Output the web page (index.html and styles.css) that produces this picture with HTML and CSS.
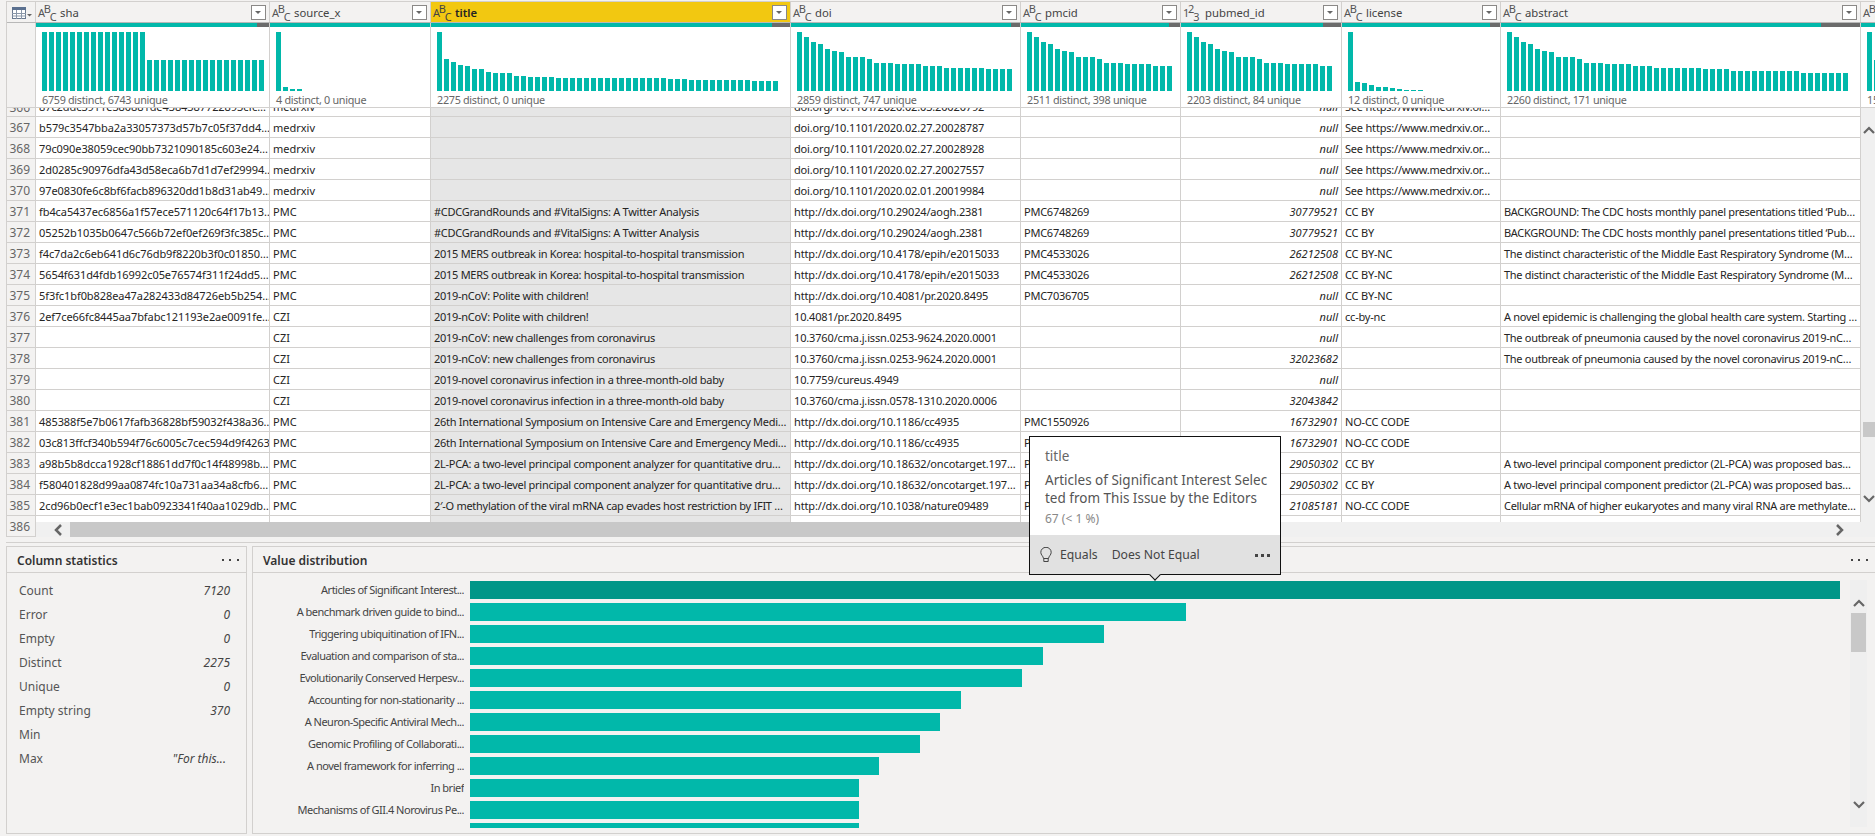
FILE: index.html
```html
<!DOCTYPE html>
<html lang="en">
<head>
<meta charset="utf-8">
<title>Column profile</title>
<link rel="stylesheet" href="styles.css">
</head>
<body>
<div class="table">
  <div class="cols head">
    <div class="corner"><svg width="20" height="12" viewBox="0 0 20 12"><rect x=".5" y=".5" width="13" height="11" fill="#fff" stroke="#6b7a90"/><rect x="0" y="0" width="14" height="3" fill="#5b7190"/><path d="M0 6.5h14M0 9h14M4.5 3v9M9.500 3v9" stroke="#8a97a8" fill="none"/><path d="M15 7h5l-2.500 2.500z" fill="#666"/></svg></div>
    <div class="h"><span class="abc">A<sup>B</sup><sub>C</sub></span><span class="name">sha</span><span class="fb"></span></div>
    <div class="h"><span class="abc">A<sup>B</sup><sub>C</sub></span><span class="name">source_x</span><span class="fb"></span></div>
    <div class="h sel"><span class="abc">A<sup>B</sup><sub>C</sub></span><span class="name">title</span><span class="fb"></span></div>
    <div class="h"><span class="abc">A<sup>B</sup><sub>C</sub></span><span class="name">doi</span><span class="fb"></span></div>
    <div class="h"><span class="abc">A<sup>B</sup><sub>C</sub></span><span class="name">pmcid</span><span class="fb"></span></div>
    <div class="h"><span class="abc">1<sup>2</sup><sub>3</sub></span><span class="name">pubmed_id</span><span class="fb"></span></div>
    <div class="h"><span class="abc">A<sup>B</sup><sub>C</sub></span><span class="name">license</span><span class="fb"></span></div>
    <div class="h"><span class="abc">A<sup>B</sup><sub>C</sub></span><span class="name">abstract</span><span class="fb"></span></div>
    <div class="h"><span class="abc">A<sup>B</sup><sub>C</sub></span></div>
  </div>
  <div class="cols profile">
    <div class="pcorner"></div>
    <div class="p"><div class="q"><b></b><u style="width:12px"></u></div><div class="bars"><i style="height:59px"></i><i style="height:59px"></i><i style="height:59px"></i><i style="height:59px"></i><i style="height:59px"></i><i style="height:59px"></i><i style="height:59px"></i><i style="height:59px"></i><i style="height:59px"></i><i style="height:59px"></i><i style="height:59px"></i><i style="height:59px"></i><i style="height:59px"></i><i style="height:59px"></i><i style="height:59px"></i><i style="height:31px"></i><i style="height:31px"></i><i style="height:31px"></i><i style="height:31px"></i><i style="height:31px"></i><i style="height:31px"></i><i style="height:31px"></i><i style="height:31px"></i><i style="height:31px"></i><i style="height:31px"></i><i style="height:31px"></i><i style="height:31px"></i><i style="height:31px"></i><i style="height:31px"></i><i style="height:31px"></i><i style="height:31px"></i><i style="height:31px"></i></div><div class="st">6759 distinct, 6743 unique</div></div>
    <div class="p"><div class="q"><b></b></div><div class="bars"><i style="height:59px"></i><i style="height:4px"></i><i style="height:2px"></i><i style="height:2px"></i></div><div class="st">4 distinct, 0 unique</div></div>
    <div class="p"><div class="q"><b></b><u style="width:18px"></u></div><div class="bars"><i style="height:59px"></i><i style="height:32px"></i><i style="height:29px"></i><i style="height:26px"></i><i style="height:25px"></i><i style="height:22px"></i><i style="height:22px"></i><i style="height:19px"></i><i style="height:18px"></i><i style="height:18px"></i><i style="height:18px"></i><i style="height:15px"></i><i style="height:15px"></i><i style="height:14px"></i><i style="height:14px"></i><i style="height:14px"></i><i style="height:14px"></i><i style="height:13px"></i><i style="height:13px"></i><i style="height:13px"></i><i style="height:13px"></i><i style="height:13px"></i><i style="height:13px"></i><i style="height:13px"></i><i style="height:13px"></i><i style="height:13px"></i><i style="height:13px"></i><i style="height:13px"></i><i style="height:13px"></i><i style="height:13px"></i><i style="height:13px"></i><i style="height:13px"></i><i style="height:13px"></i><i style="height:12px"></i><i style="height:12px"></i><i style="height:12px"></i><i style="height:11px"></i><i style="height:11px"></i><i style="height:11px"></i><i style="height:11px"></i><i style="height:11px"></i><i style="height:11px"></i><i style="height:11px"></i><i style="height:11px"></i><i style="height:11px"></i><i style="height:10px"></i><i style="height:10px"></i><i style="height:10px"></i><i style="height:10px"></i></div><div class="st">2275 distinct, 0 unique</div></div>
    <div class="p"><div class="q"><b></b><u style="width:9px"></u></div><div class="bars"><i style="height:59px"></i><i style="height:54px"></i><i style="height:49px"></i><i style="height:47px"></i><i style="height:42px"></i><i style="height:40px"></i><i style="height:39px"></i><i style="height:34px"></i><i style="height:34px"></i><i style="height:34px"></i><i style="height:32px"></i><i style="height:28px"></i><i style="height:28px"></i><i style="height:28px"></i><i style="height:27px"></i><i style="height:27px"></i><i style="height:27px"></i><i style="height:27px"></i><i style="height:25px"></i><i style="height:25px"></i><i style="height:25px"></i><i style="height:23px"></i><i style="height:23px"></i><i style="height:23px"></i><i style="height:23px"></i><i style="height:23px"></i><i style="height:23px"></i><i style="height:22px"></i><i style="height:22px"></i><i style="height:22px"></i><i style="height:22px"></i></div><div class="st">2859 distinct, 747 unique</div></div>
    <div class="p"><div class="q"><b></b><u style="width:11px"></u></div><div class="bars"><i style="height:59px"></i><i style="height:54px"></i><i style="height:49px"></i><i style="height:47px"></i><i style="height:42px"></i><i style="height:40px"></i><i style="height:39px"></i><i style="height:34px"></i><i style="height:34px"></i><i style="height:34px"></i><i style="height:32px"></i><i style="height:28px"></i><i style="height:28px"></i><i style="height:28px"></i><i style="height:27px"></i><i style="height:27px"></i><i style="height:27px"></i><i style="height:27px"></i><i style="height:25px"></i><i style="height:25px"></i><i style="height:25px"></i></div><div class="st">2511 distinct, 398 unique</div></div>
    <div class="p"><div class="q"><b></b><u style="width:18px"></u></div><div class="bars"><i style="height:59px"></i><i style="height:54px"></i><i style="height:49px"></i><i style="height:47px"></i><i style="height:42px"></i><i style="height:40px"></i><i style="height:39px"></i><i style="height:34px"></i><i style="height:34px"></i><i style="height:34px"></i><i style="height:32px"></i><i style="height:28px"></i><i style="height:28px"></i><i style="height:28px"></i><i style="height:27px"></i><i style="height:27px"></i><i style="height:27px"></i><i style="height:27px"></i><i style="height:27px"></i><i style="height:25px"></i><i style="height:25px"></i></div><div class="st">2203 distinct, 84 unique</div></div>
    <div class="p"><div class="q"><b></b><u style="width:10px"></u></div><div class="bars"><i style="height:59px"></i><i style="height:9px"></i><i style="height:8px"></i><i style="height:6px"></i><i style="height:4px"></i><i style="height:4px"></i><i style="height:3px"></i><i style="height:2px"></i><i style="height:1px"></i><i style="height:1px"></i><i style="height:1px"></i></div><div class="st">12 distinct, 0 unique</div></div>
    <div class="p"><div class="q"><b></b><u style="width:39px"></u></div><div class="bars"><i style="height:59px"></i><i style="height:54px"></i><i style="height:49px"></i><i style="height:47px"></i><i style="height:42px"></i><i style="height:40px"></i><i style="height:39px"></i><i style="height:34px"></i><i style="height:34px"></i><i style="height:34px"></i><i style="height:32px"></i><i style="height:28px"></i><i style="height:28px"></i><i style="height:28px"></i><i style="height:27px"></i><i style="height:27px"></i><i style="height:27px"></i><i style="height:27px"></i><i style="height:25px"></i><i style="height:25px"></i><i style="height:25px"></i><i style="height:23px"></i><i style="height:23px"></i><i style="height:23px"></i><i style="height:23px"></i><i style="height:23px"></i><i style="height:23px"></i><i style="height:23px"></i><i style="height:22px"></i><i style="height:22px"></i><i style="height:22px"></i><i style="height:22px"></i><i style="height:20px"></i><i style="height:20px"></i><i style="height:20px"></i><i style="height:20px"></i><i style="height:20px"></i><i style="height:20px"></i><i style="height:20px"></i><i style="height:20px"></i><i style="height:20px"></i><i style="height:20px"></i><i style="height:18px"></i><i style="height:18px"></i><i style="height:18px"></i><i style="height:18px"></i><i style="height:18px"></i><i style="height:18px"></i><i style="height:18px"></i></div><div class="st">2260 distinct, 171 unique</div></div>
    <div class="p last"><div class="q"><b></b></div><div class="bars"><i style="height:59px"></i><i style="height:31px"></i></div><div class="st">1575 distinct, 0 unique</div></div>
  </div>
  <div class="body">
    <div class="nums">
      <div class="n partial">366</div>
      <div class="n">367</div><div class="n">368</div><div class="n">369</div><div class="n">370</div><div class="n">371</div>
      <div class="n">372</div><div class="n">373</div><div class="n">374</div><div class="n">375</div><div class="n">376</div>
      <div class="n">377</div><div class="n">378</div><div class="n">379</div><div class="n">380</div><div class="n">381</div>
      <div class="n">382</div><div class="n">383</div><div class="n">384</div><div class="n">385</div><div class="n">386</div>
    </div>
    <div class="main">
      <div class="rows">
        <div class="row top"><div>87c2ddc3911e380881de4384387722893cfc…</div><div>medrxiv</div><div></div><div>doi.org/10.1101/2020.02.03.20020792</div><div></div><div class="num">null</div><div>See https://www.medrxiv.or…</div><div></div></div>
        <div class="row"><div>b579c3547bba2a33057373d57b7c05f37dd4…</div><div>medrxiv</div><div></div><div>doi.org/10.1101/2020.02.27.20028787</div><div></div><div class="num">null</div><div>See https://www.medrxiv.or…</div><div></div></div>
        <div class="row"><div>79c090e38059cec90bb7321090185c603e24…</div><div>medrxiv</div><div></div><div>doi.org/10.1101/2020.02.27.20028928</div><div></div><div class="num">null</div><div>See https://www.medrxiv.or…</div><div></div></div>
        <div class="row"><div>2d0285c90976dfa43d58eca6b7d1d7ef29994…</div><div>medrxiv</div><div></div><div>doi.org/10.1101/2020.02.27.20027557</div><div></div><div class="num">null</div><div>See https://www.medrxiv.or…</div><div></div></div>
        <div class="row"><div>97e0830fe6c8bf6facb896320dd1b8d31ab49…</div><div>medrxiv</div><div></div><div>doi.org/10.1101/2020.02.01.20019984</div><div></div><div class="num">null</div><div>See https://www.medrxiv.or…</div><div></div></div>
        <div class="row"><div>fb4ca5437ec6856a1f57ece571120c64f17b13…</div><div>PMC</div><div>#CDCGrandRounds and #VitalSigns: A Twitter Analysis</div><div>http://dx.doi.org/10.29024/aogh.2381</div><div>PMC6748269</div><div class="num">30779521</div><div>CC BY</div><div>BACKGROUND: The CDC hosts monthly panel presentations titled ‘Pub…</div></div>
        <div class="row"><div>05252b1035b0647c566b72ef0ef269f3fc385c…</div><div>PMC</div><div>#CDCGrandRounds and #VitalSigns: A Twitter Analysis</div><div>http://dx.doi.org/10.29024/aogh.2381</div><div>PMC6748269</div><div class="num">30779521</div><div>CC BY</div><div>BACKGROUND: The CDC hosts monthly panel presentations titled ‘Pub…</div></div>
        <div class="row"><div>f4c7da2c6eb641d6c76db9f8220b3f0c01850…</div><div>PMC</div><div>2015 MERS outbreak in Korea: hospital-to-hospital transmission</div><div>http://dx.doi.org/10.4178/epih/e2015033</div><div>PMC4533026</div><div class="num">26212508</div><div>CC BY-NC</div><div>The distinct characteristic of the Middle East Respiratory Syndrome (M…</div></div>
        <div class="row"><div>5654f631d4fdb16992c05e76574f311f24dd5…</div><div>PMC</div><div>2015 MERS outbreak in Korea: hospital-to-hospital transmission</div><div>http://dx.doi.org/10.4178/epih/e2015033</div><div>PMC4533026</div><div class="num">26212508</div><div>CC BY-NC</div><div>The distinct characteristic of the Middle East Respiratory Syndrome (M…</div></div>
        <div class="row"><div>5f3fc1bf0b828ea47a282433d84726eb5b254…</div><div>PMC</div><div>2019-nCoV: Polite with children!</div><div>http://dx.doi.org/10.4081/pr.2020.8495</div><div>PMC7036705</div><div class="num">null</div><div>CC BY-NC</div><div></div></div>
        <div class="row"><div>2ef7ce66fc8445aa7bfabc121193e2ae0091fe…</div><div>CZI</div><div>2019-nCoV: Polite with children!</div><div>10.4081/pr.2020.8495</div><div></div><div class="num">null</div><div>cc-by-nc</div><div>A novel epidemic is challenging the global health care system. Starting …</div></div>
        <div class="row"><div></div><div>CZI</div><div>2019-nCoV: new challenges from coronavirus</div><div>10.3760/cma.j.issn.0253-9624.2020.0001</div><div></div><div class="num">null</div><div></div><div>The outbreak of pneumonia caused by the novel coronavirus 2019-nC…</div></div>
        <div class="row"><div></div><div>CZI</div><div>2019-nCoV: new challenges from coronavirus</div><div>10.3760/cma.j.issn.0253-9624.2020.0001</div><div></div><div class="num">32023682</div><div></div><div>The outbreak of pneumonia caused by the novel coronavirus 2019-nC…</div></div>
        <div class="row"><div></div><div>CZI</div><div>2019-novel coronavirus infection in a three-month-old baby</div><div>10.7759/cureus.4949</div><div></div><div class="num">null</div><div></div><div></div></div>
        <div class="row"><div></div><div>CZI</div><div>2019-novel coronavirus infection in a three-month-old baby</div><div>10.3760/cma.j.issn.0578-1310.2020.0006</div><div></div><div class="num">32043842</div><div></div><div></div></div>
        <div class="row"><div>485388f5e7b0617fafb36828bf59032f438a36…</div><div>PMC</div><div>26th International Symposium on Intensive Care and Emergency Medi…</div><div>http://dx.doi.org/10.1186/cc4935</div><div>PMC1550926</div><div class="num">16732901</div><div>NO-CC CODE</div><div></div></div>
        <div class="row"><div>03c813ffcf340b594f76c6005c7cec594d9f4263</div><div>PMC</div><div>26th International Symposium on Intensive Care and Emergency Medi…</div><div>http://dx.doi.org/10.1186/cc4935</div><div>PMC1550926</div><div class="num">16732901</div><div>NO-CC CODE</div><div></div></div>
        <div class="row"><div>a98b5b8dcca1928cf18861dd7f0c14f48998b…</div><div>PMC</div><div>2L-PCA: a two-level principal component analyzer for quantitative dru…</div><div>http://dx.doi.org/10.18632/oncotarget.197…</div><div>PMC5421915</div><div class="num">29050302</div><div>CC BY</div><div>A two-level principal component predictor (2L-PCA) was proposed bas…</div></div>
        <div class="row"><div>f580401828d99aa0874fc10a731aa34a8cfb6…</div><div>PMC</div><div>2L-PCA: a two-level principal component analyzer for quantitative dru…</div><div>http://dx.doi.org/10.18632/oncotarget.197…</div><div>PMC5421915</div><div class="num">29050302</div><div>CC BY</div><div>A two-level principal component predictor (2L-PCA) was proposed bas…</div></div>
        <div class="row"><div>2cd96b0ecf1e3ec1bab0923341f40aa1029db…</div><div>PMC</div><div>2′-O methylation of the viral mRNA cap evades host restriction by IFIT …</div><div>http://dx.doi.org/10.1038/nature09489</div><div>PMC4533026</div><div class="num">21085181</div><div>NO-CC CODE</div><div>Cellular mRNA of higher eukaryotes and many viral RNA are methylate…</div></div>
        <div class="row"><div></div><div></div><div></div><div></div><div></div><div></div><div></div><div></div></div>
      </div>
      <div class="hscroll">
        <svg class="chev-l" width="10" height="14" viewBox="0 0 10 14"><path d="M8 2 3 7l5 5" fill="none" stroke="#666" stroke-width="2.500"/></svg>
        <div class="hthumb"></div>
        <svg class="chev-r" width="10" height="14" viewBox="0 0 10 14"><path d="M2 2l5 5-5 5" fill="none" stroke="#666" stroke-width="2.500"/></svg>
      </div>
    </div>
    <div class="vscroll">
      <svg class="chev-u" width="12" height="8" viewBox="0 0 12 8"><path d="M1 7l5-5 5 5" fill="none" stroke="#666" stroke-width="2.200"/></svg>
      <div class="vthumb"></div>
      <svg class="chev-d" width="12" height="8" viewBox="0 0 12 8"><path d="M1 1l5 5 5-5" fill="none" stroke="#666" stroke-width="2.200"/></svg>
    </div>
  </div>
</div>
<div class="bottom">
  <section class="panel stats">
    <header class="ph"><h2>Column statistics</h2><svg class="more" width="17" height="2" viewBox="0 0 17 2"><path d="M0 0h2v2H0zM7 0h2v2H7zM15 0h2v2h-2z" fill="#444"/></svg></header>
    <dl class="sl">
      <div><dt>Count</dt><dd>7120</dd></div>
      <div><dt>Error</dt><dd>0</dd></div>
      <div><dt>Empty</dt><dd>0</dd></div>
      <div><dt>Distinct</dt><dd>2275</dd></div>
      <div><dt>Unique</dt><dd>0</dd></div>
      <div><dt>Empty string</dt><dd>370</dd></div>
      <div><dt>Min</dt><dd></dd></div>
      <div><dt>Max</dt><dd class="maxv">"For this...</dd></div>
    </dl>
  </section>
  <section class="panel dist">
    <header class="ph"><h2>Value distribution</h2><svg class="more" width="17" height="2" viewBox="0 0 17 2"><path d="M0 0h2v2H0zM7 0h2v2H7zM15 0h2v2h-2z" fill="#444"/></svg></header>
    <div class="dbody">
      <div class="chart">
        <div class="dr"><span>Articles of Significant Interest...</span><i class="top-bar" style="width:1370px"></i></div>
        <div class="dr"><span>A benchmark driven guide to bind...</span><i style="width:716px"></i></div>
        <div class="dr"><span>Triggering ubiquitination of IFN...</span><i style="width:634px"></i></div>
        <div class="dr"><span>Evaluation and comparison of sta...</span><i style="width:573px"></i></div>
        <div class="dr"><span>Evolutionarily Conserved Herpesv...</span><i style="width:552px"></i></div>
        <div class="dr"><span>Accounting for non-stationarity ...</span><i style="width:491px"></i></div>
        <div class="dr"><span>A Neuron-Specific Antiviral Mech...</span><i style="width:470px"></i></div>
        <div class="dr"><span>Genomic Profiling of Collaborati...</span><i style="width:450px"></i></div>
        <div class="dr"><span>A novel framework for inferring ...</span><i style="width:409px"></i></div>
        <div class="dr"><span>In brief</span><i style="width:389px"></i></div>
        <div class="dr"><span>Mechanisms of GII.4 Norovirus Pe...</span><i style="width:389px"></i></div>
        <div class="dr"><span></span><i style="width:389px"></i></div>
      </div>
      <div class="dscroll">
        <svg class="du" width="12" height="8" viewBox="0 0 12 8"><path d="M1 7l5-5 5 5" fill="none" stroke="#666" stroke-width="2.200"/></svg>
        <div class="dthumb"></div>
        <svg class="dd" width="12" height="8" viewBox="0 0 12 8"><path d="M1 1l5 5 5-5" fill="none" stroke="#666" stroke-width="2.200"/></svg>
      </div>
    </div>
  </section>
</div>
<aside class="tip">
  <div class="tip-top">
    <div class="tip-title">title</div>
    <div class="tip-text">Articles of Significant Interest Selec<br>ted from This Issue by the Editors</div>
    <div class="tip-count">67 (&lt; 1 %)</div>
  </div>
  <div class="tip-foot">
    <svg width="12" height="16" viewBox="0 0 12 16"><path d="M3.500 11.500C3.200 9 .8 8 .8 5.300A5.200 5 0 0 1 11.200 5.300C11.200 8 8.800 9 8.500 11.500zM3.800 11.500V14.500H8.200V11.500" fill="none" stroke="#444" stroke-width="1"/></svg>
    <span class="act eq">Equals</span>
    <span class="act">Does Not Equal</span>
    <svg class="tip-more" width="15" height="3" viewBox="0 0 15 3"><path d="M0 0h3v3H0zM6 0h3v3H6zM12 0h3v3h-3z" fill="#444"/></svg>
  </div>
  <div class="tip-caret"></div>
</aside>
</body>
</html>
```

FILE: styles.css
```css
* { box-sizing: border-box; }
html, body { margin: 0; padding: 0; }
body {
  width: 1875px; height: 836px; overflow: hidden; position: relative;
  background: #f3f2f1; color: #252423;
  font-family: "Noto Sans", "Open Sans", sans-serif; font-size: 11px;
}
.table { margin: 1px 0 0 6px; border-top: 1px solid #d2d0ce; width: 1869px; border-left: 1px solid #d2d0ce; }
.cols { display: grid; grid-template-columns: 29px 234px 161px 360px 230px 160px 161px 159px 360px 15px; }
.head { height: 21px; border-bottom: 1px solid #b8b8b8; }
.corner { display: flex; align-items: center; padding: 2px 0 0 5px; border-right: 1px solid #d2d0ce; }
.h { display: flex; align-items: center; padding-left: 2px; border-right: 1px solid #d2d0ce; overflow: hidden; min-width: 0; color: #444; font-size: 11.300px; }
.h.sel { background: #f2c811; color: #252423; font-weight: 600; }
.abc { width: 22px; flex: none; font-size: 11px; color: #555; line-height: 1; letter-spacing: -1.200px; }
.abc sup, .abc sub { font-size: 11px; line-height: 0; }
.abc sup { vertical-align: 4px; }
.abc sub { vertical-align: -4px; }
.h.sel .abc { font-weight: 400; color: #444; }
.fb { width: 15px; height: 15px; margin: 0 3px 0 auto; flex: none; background: #fff; border: 1px solid #8a8886; position: relative; }
.fb::after { content: ""; position: absolute; left: 3px; top: 5px; border: 3.500px solid transparent; border-top: 3.500px solid #666; }

.profile { height: 85px; }
.pcorner { background: #f3f2f1; border-right: 1px solid #d2d0ce; border-bottom: 1px solid #d2d0ce; }
.p { background: #fff; border-right: 1px solid #d2d0ce; border-bottom: 1px solid #d2d0ce; display: flex; flex-direction: column; min-width: 0; overflow: hidden; }
.q { display: flex; height: 4px; flex: none; background: #01b8aa; }
.q b { flex: 1; }
.q u { display: block; background: #6b6b6b; }
.bars { height: 59px; margin: 5px 0 0 6px; display: flex; align-items: flex-end; gap: 2px; flex: none; }
.bars i { width: 5px; flex: none; background: #01b8aa; }
.st { margin: 2px 0 0 6px; color: #666; font-size: 10.800px; line-height: 14px; letter-spacing: -.3px; white-space: nowrap; }

.body { display: flex; height: 429px; }
.nums { width: 29px; flex: none; border-right: 1px solid #d2d0ce; border-bottom: 1px solid #d2d0ce; }
.n { height: 21px; border-bottom: 1px solid #d2d0ce; line-height: 22px; text-align: right; padding-right: 5px; font-size: 12px; color: #666; overflow: hidden; }
.n.partial { height: 9px; line-height: 0; }
.n:last-child { border-bottom: 0; }
.main { width: 1825px; flex: none; display: flex; flex-direction: column; }
.rows { height: 414px; overflow: hidden; flex: none; background: #fff; }
.row { display: grid; grid-template-columns: 234px 161px 360px 230px 160px 161px 159px 360px; height: 21px; border-bottom: 1px solid #d2d0ce; }
.row > div { padding: 0 3px; border-right: 1px solid #d2d0ce; line-height: 22px; height: 20px; white-space: nowrap; overflow: hidden; }
.row > :nth-child(1) { letter-spacing: -.08px; }
.row > :nth-child(3) { background: #e6e6e6; letter-spacing: -.28px; }
.row > :nth-child(4) { letter-spacing: -.15px; }
.row > :nth-child(5) { letter-spacing: -.25px; }
.row > :nth-child(7) { letter-spacing: -.2px; }
.row > :nth-child(8) { letter-spacing: -.3px; }
.row .num { text-align: right; font-style: italic; }
.row.top { height: 9px; grid-template-rows: 8px; align-items: end; overflow: hidden; }
.hscroll { display: flex; align-items: center; height: 15px; background: #f0f0f0; flex: none; }
.chev-l { margin-left: 17px; flex: none; }
.hthumb { height: 15px; width: 1030px; margin-left: 7px; background: #c8c8c8; flex: none; }
.chev-r { margin-left: auto; margin-right: 16px; flex: none; }
.vscroll { width: 15px; flex: none; display: flex; flex-direction: column; align-items: center; background: #f0f0f0; }
.chev-u { margin-top: 18px; flex: none; }
.vthumb { width: 13px; height: 15px; margin: 288px 0 0 2px; background: #c8c8c8; flex: none; }
.chev-d { margin-top: 58px; flex: none; }

.bottom { display: flex; gap: 5px; margin: 5px 0 0 6px; border-top: 1px solid #d2d0ce; height: 291px; padding-top: 3px; }
.panel { border: 1px solid #d2d0ce; height: 288px; }
.stats { width: 241px; flex: none; }
.dist { flex: 1; border-right: 0; min-width: 0; }
.ph { height: 26px; display: flex; align-items: center; justify-content: space-between; border-bottom: 1px solid #d2d0ce; padding: 0 7px 0 10px; }
h2 { margin: 2px 0 0; font-size: 12px; font-weight: 600; color: #333; }
.more { flex: none; }
.sl { margin: 6px 0 0; padding: 0 16px 0 12px; }
.sl div { display: flex; justify-content: space-between; height: 24px; line-height: 24px; font-size: 12px; color: #555; }
.sl dd { margin: 0; font-style: italic; color: #444; }
.sl .maxv { padding-right: 4px; }
.dbody { display: flex; }
.chart { width: 1597px; height: 255px; overflow: hidden; padding-top: 8px; flex: none; }
.dr { display: flex; align-items: center; height: 22px; padding-bottom: 4px; }
.dr span { width: 211px; flex: none; text-align: right; font-size: 11px; letter-spacing: -.5px; color: #444; white-space: nowrap; overflow: hidden; line-height: 18px; }
.dr i { display: block; height: 18px; margin-left: 6px; background: #01b8aa; flex: none; }
.dr .top-bar { background: #009688; }
.dscroll { width: 17px; height: 247px; margin-top: 7px; background: #efefef; display: flex; flex-direction: column; align-items: center; flex: none; }
.du { margin-top: 19px; flex: none; }
.dthumb { width: 15px; height: 39px; margin-top: 6px; background: #c8c8c8; flex: none; }
.dd { margin-top: 149px; flex: none; }

.tip { position: absolute; left: 1029px; top: 436px; width: 252px; height: 139px; border: 1px solid #111; background: #fff; display: flex; flex-direction: column; }
.tip-top { height: 98px; padding: 9px 0 0 15px; }
.tip-title { font-size: 13.500px; line-height: 20px; color: #666; }
.tip-text { margin-top: 5px; font-size: 13.500px; line-height: 18px; color: #555; white-space: nowrap; }
.tip-count { margin-top: 1px; font-size: 12px; line-height: 22px; color: #888; }
.tip-foot { flex: 1; background: #e1e1e1; display: flex; align-items: center; padding-left: 10px; position: relative; font-size: 12.200px; color: #444; }
.act.eq { margin-left: 8px; margin-right: 14px; }
.tip-more { position: absolute; right: 10px; top: 19px; }
.tip-caret { position: absolute; left: 121px; bottom: -5px; width: 8px; height: 8px; background: #e1e1e1; border-right: 1px solid #111; border-bottom: 1px solid #111; transform: rotate(45deg); }
```
